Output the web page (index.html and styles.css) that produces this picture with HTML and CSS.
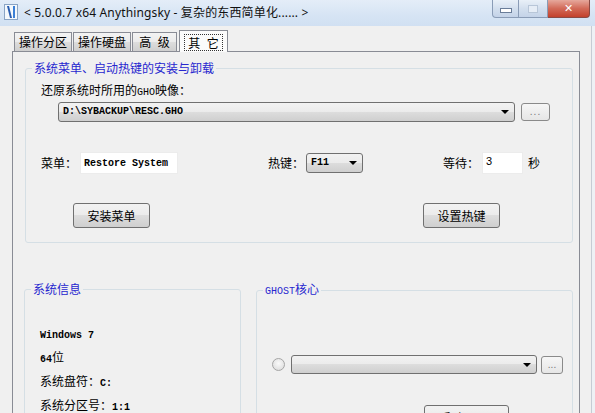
FILE: index.html
```html
<!DOCTYPE html>
<html lang="zh-CN">
<head>
    <meta charset="UTF-8">
    <title>Anythingsky</title>
    <link rel="stylesheet" href="styles.css">
</head>
<body>
<div class="window">
    <div class="titlebar">
        <svg class="app-icon" width="14" height="16" viewBox="0 0 14 16">
            <rect x="0.5" y="0.5" width="13" height="15" fill="#f4f8fc" stroke="#8aa4c4"/>
            <path d="M3 2 L6 14 L8 14 L5 2 Z" fill="#2a5db0"/>
            <path d="M9 2 L11 2 L11 14 L9 14 Z" fill="#3b7fd6"/>
        </svg>
        <span class="title">&lt; 5.0.0.7 x64 Anythingsky - 复杂的东西简单化...... &gt;</span>
        <div class="caption-buttons">
            <span class="cap-btn cap-min"><i></i></span>
            <span class="cap-btn cap-max"><i></i></span>
            <span class="cap-btn cap-close">✕</span>
        </div>
    </div>

    <div class="frame">
        <div class="client">
            <div class="tabs">
                <span class="tab t1">操作分区</span>
                <span class="tab t2">操作硬盘</span>
                <span class="tab t3">高 级</span>
                <span class="tab t4 active"><span class="focus">其 它</span></span>
            </div>

            <div class="tab-page">
                <fieldset class="group group-menu">
                    <legend>系统菜单、启动热键的安装与卸载</legend>
                    <div class="menu-body">
                        <div class="label">还原系统时所用的<span class="mono-legend">GHO</span>映像：</div>
                        <div class="gho-row">
                            <div class="combo gho-combo"><span class="mono">D:\SYBACKUP\RESC.GHO</span><b class="arrow"></b></div>
                            <span class="dots-btn">...</span>
                        </div>
                        <div class="field-row">
                            <span class="flabel l-menu">菜单：</span>
                            <span class="textbox tb-menu"><span class="mono">Restore System</span></span>
                            <span class="flabel l-key">热键：</span>
                            <div class="combo key-combo"><span class="mono">F11</span><b class="arrow"></b></div>
                            <span class="flabel l-wait">等待：</span>
                            <span class="textbox tb-wait">3</span>
                            <span class="unit">秒</span>
                        </div>
                        <div class="button-row">
                            <span class="btn btn-install">安装菜单</span>
                            <span class="btn btn-hotkey">设置热键</span>
                        </div>
                    </div>
                </fieldset>

                <div class="group-row">
                    <fieldset class="group group-info">
                        <legend>系统信息</legend>
                        <div class="info-body">
                            <div class="info-line"><span class="mono">Windows 7</span></div>
                            <div class="info-line"><span class="mono">64</span>位</div>
                            <div class="info-line">系统盘符：<span class="mono">C:</span></div>
                            <div class="info-line">系统分区号：<span class="mono">1:1</span></div>
                        </div>
                    </fieldset>

                    <fieldset class="group group-ghost">
                        <legend><span class="mono-legend">GHOST</span>核心</legend>
                        <div class="ghost-body">
                            <div class="ghost-row">
                                <span class="radio"></span>
                                <div class="combo ghost-combo"><b class="arrow"></b></div>
                                <span class="dots-btn small">...</span>
                            </div>
                            <span class="btn btn-ghost">手动<span class="mono-legend">GHOST</span></span>
                        </div>
                    </fieldset>
                </div>
            </div>
        </div>
        <div class="frame-right"></div>
    </div>
</div>
</body>
</html>
```

FILE: styles.css
```css
html, body {
    margin: 0;
    padding: 0;
    width: 595px;
    height: 413px;
    overflow: hidden;
    background: #f0f0f0;
    font-family: "Noto Sans CJK SC", sans-serif;
    font-size: 12px;
    line-height: 14px;
    color: #000;
}
.window {
    display: flex;
    flex-direction: column;
    height: 413px;
}
.titlebar {
    height: 26px;
    flex: none;
    display: flex;
    align-items: flex-start;
    background: linear-gradient(#e4edf8, #d6e4f4 60%, #d1e0f2);
}
.app-icon {
    margin: 4px 0 0 4px;
    flex: none;
}
.title {
    margin-left: 6px;
    margin-top: 5px;
    font-family: "Noto Sans", "Noto Sans CJK SC", sans-serif;
    font-size: 12px;
    line-height: 16px;
    letter-spacing: 0.15px;
    color: #111;
}
.caption-buttons {
    margin-left: auto;
    margin-right: 5px;
    display: flex;
    height: 18px;
}
.cap-btn {
    display: flex;
    align-items: center;
    justify-content: center;
    height: 17px;
    border: 1px solid #8a9cb6;
    border-top: none;
    background: linear-gradient(#e9f0f8, #d3dfee 50%, #c4d3e8);
}
.cap-min {
    width: 25px;
    border-radius: 0 0 0 4px;
}
.cap-min i {
    width: 10px;
    height: 3px;
    margin-top: 4px;
    border: 1px solid #6a7d99;
    background: #fff;
}
.cap-max {
    width: 28px;
    border-left: none;
}
.cap-max i {
    width: 8px;
    height: 6px;
    border: 1px solid #b8c6d8;
    background: #e6edf6;
}
.cap-close {
    width: 41px;
    border-left: none;
    border-color: #8a4a44;
    border-radius: 0 0 4px 0;
    background: linear-gradient(#e6a89c, #d26a58 50%, #c3412c);
    color: #fff;
    font-family: "DejaVu Sans", sans-serif;
    font-size: 11px;
    font-weight: bold;
}

.frame {
    flex: 1;
    display: flex;
}
.client {
    width: 583px;
    flex: none;
}
.frame-right {
    flex: 1;
    border-left: 1px solid #c6ccd4;
    margin-left: 8px;
    background: #eef1f5;
}

/* tabs */
.tabs {
    display: flex;
    align-items: flex-end;
    padding-left: 14px;
    margin-top: 5px;
    height: 20px;
}
.tab {
    height: 19px;
    box-sizing: border-box;
    border: 1px solid #898c95;
    border-bottom: none;
    margin-right: 1px;
    background: linear-gradient(#f3f3f3, #ebebeb 50%, #dddddd 50%, #cfcfcf);
    text-align: center;
    line-height: 18px;
    font-size: 12px;
    word-spacing: 4px;
}
.t1, .t2 { width: 58px; }
.t3 { width: 45px; }
.t4 { width: 49px; }
.tab.active {
    height: 22px;
    margin-bottom: -1px;
    margin-left: 1px;
    background: #fbfbfb;
    line-height: 20px;
    position: relative;
    padding-top: 2px;
}
.focus {
    display: inline-block;
    padding: 0 3px;
    line-height: 15px;
    outline: 1px dotted #333;
}

.tab-page {
    margin-left: 12px;
    width: 568px;
    height: 400px;
    box-sizing: border-box;
    border: 1px solid #898c95;
    background: #f0f0f0;
}

/* group boxes */
.group {
    margin: 0;
    padding: 0;
    border: 1px solid #d5dfe5;
    border-radius: 3px;
    box-sizing: border-box;
    min-width: 0;
}
.group legend {
    padding: 0 2px;
    margin-left: 6px;
    color: #2727cf;
    font-size: 12px;
    line-height: 14px;
}
.group-menu {
    margin: 9px 0 0 12px;
    width: 548px;
}
.menu-body {
    padding: 8px 0 14px 15px;
}
.label {
    height: 14px;
}
.mono {
    font-family: "Liberation Mono", monospace;
    font-size: 10px;
    font-weight: bold;
}
.mono-legend {
    font-family: "Liberation Mono", monospace;
    font-size: 10px;
}

.combo {
    position: relative;
    box-sizing: border-box;
    border: 1px solid #707070;
    border-radius: 3px;
    background: linear-gradient(#f2f2f2, #ebebeb 50%, #dddddd 50%, #cfcfcf);
    display: flex;
    align-items: center;
    padding-left: 4px;
}
.arrow {
    position: absolute;
    right: 5px;
    top: 50%;
    margin-top: -2px;
    width: 0;
    height: 0;
    border-left: 4px solid transparent;
    border-right: 4px solid transparent;
    border-top: 4px solid #000;
}
.gho-row {
    display: flex;
    align-items: center;
    margin-top: 5px;
    margin-left: 17px;
}
.gho-combo {
    width: 457px;
    height: 20px;
}
.dots-btn {
    margin-left: 6px;
    width: 29px;
    height: 18px;
    box-sizing: border-box;
    border: 1px solid #8a8a8a;
    border-radius: 3px;
    background: linear-gradient(#f6f6f6, #e6e6e6);
    color: #777;
    font-family: "Liberation Sans", sans-serif;
    font-size: 10px;
    line-height: 15px;
    text-align: center;
    letter-spacing: 1px;
}
.dots-btn.small {
    width: 22px;
    margin-left: 4px;
    letter-spacing: 0;
}

.field-row {
    display: flex;
    align-items: center;
    margin-top: 30px;
    height: 22px;
}
.flabel {
    flex: none;
}
.l-menu { width: 39px; }
.l-key { width: 38px; margin-left: 90px; }
.l-wait { width: 39px; margin-left: 80px; }
.textbox {
    height: 22px;
    box-sizing: border-box;
    background: #fff;
    border: 1px solid #ececec;
    padding: 1px 0 0 3px;
    line-height: 14px;
}
.tb-menu { width: 98px; }
.tb-wait {
    width: 41px;
    font-family: "Liberation Sans", sans-serif;
    font-size: 11px;
}
.key-combo {
    width: 57px;
    height: 20px;
}
.unit {
    margin-left: 5px;
}

.button-row {
    display: flex;
    margin-top: 29px;
}
.btn {
    box-sizing: border-box;
    height: 25px;
    border: 1px solid #707070;
    border-radius: 3px;
    background: linear-gradient(#f2f2f2, #ebebeb 50%, #dddddd 50%, #cfcfcf);
    display: flex;
    align-items: center;
    justify-content: center;
}
.btn-install {
    width: 77px;
    margin-left: 32px;
}
.btn-hotkey {
    width: 77px;
    margin-left: 273px;
}

.group-row {
    display: flex;
    margin-top: 39px;
    margin-left: 11px;
}
.group-info {
    width: 217px;
    height: 160px;
}
.info-body {
    padding: 25px 0 0 15px;
}
.info-line {
    height: 24px;
    line-height: 24px;
}
.group-ghost {
    width: 317px;
    height: 160px;
    margin-left: 15px;
}
.ghost-body {
    padding: 56px 0 0 15px;
}
.ghost-row {
    display: flex;
    align-items: center;
}
.radio {
    width: 11px;
    height: 11px;
    border: 1px solid #a5a5a5;
    border-radius: 50%;
    background: radial-gradient(circle at 50% 40%, #fafafa, #d8d8d8);
    flex: none;
}
.ghost-combo {
    margin-left: 6px;
    width: 246px;
    height: 19px;
}
.btn-ghost {
    width: 85px;
    margin: 31px 0 0 152px;
    align-items: flex-start;
    padding-top: 5px;
}
```
